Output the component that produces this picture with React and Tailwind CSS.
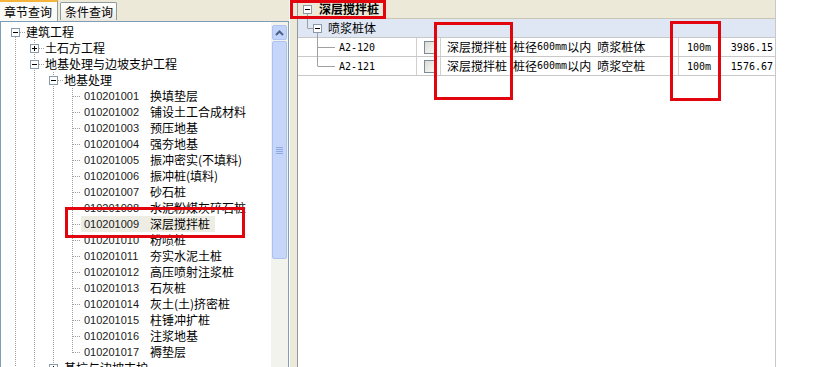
import React from "react";

const CJK = { fontFamily: '"Noto Sans CJK SC", "Liberation Sans", sans-serif' };
const SANS = { fontFamily: '"Liberation Sans", "Noto Sans CJK SC", sans-serif' };
const MONO = { fontFamily: '"DejaVu Sans Mono", "Liberation Mono", monospace' };

const items = [
  ["010201001", "换填垫层"],
  ["010201002", "铺设土工合成材料"],
  ["010201003", "预压地基"],
  ["010201004", "强夯地基"],
  ["010201005", "振冲密实(不填料)"],
  ["010201006", "振冲桩(填料)"],
  ["010201007", "砂石桩"],
  ["010201008", "水泥粉煤灰碎石桩"],
  ["010201009", "深层搅拌桩"],
  ["010201010", "粉喷桩"],
  ["010201011", "夯实水泥土桩"],
  ["010201012", "高压喷射注浆桩"],
  ["010201013", "石灰桩"],
  ["010201014", "灰土(土)挤密桩"],
  ["010201015", "柱锤冲扩桩"],
  ["010201016", "注浆地基"],
  ["010201017", "褥垫层"],
];

const rows = [
  { lvl: 0, box: "-", text: "建筑工程" },
  { lvl: 1, box: "+", text: "土石方工程" },
  { lvl: 1, box: "-", text: "地基处理与边坡支护工程" },
  { lvl: 2, box: "-", text: "地基处理" },
  ...items.map(([c, n]) => ({ lvl: 3, code: c, text: n, sel: c === "010201009" })),
  { lvl: 2, box: "+", text: "基坑与边坡支护" },
];

const LX = [14, 33, 52, 71];
const cy = (i) => 10 + 16 * i;

function TreeLines() {
  const dot = { stroke: "#a0a0a0", strokeWidth: 1, strokeDasharray: "1 1" };
  const v = (x, y1, y2, k) => <line key={k} x1={x + 0.5} x2={x + 0.5} y1={y1} y2={y2} style={dot} />;
  const h = (x1, x2, y, k) => <line key={k} x1={x1} x2={x2} y1={y + 0.5} y2={y + 0.5} style={dot} />;
  const els = [];
  els.push(v(LX[0], cy(0) + 5, 360, "v0"));
  els.push(v(LX[1], cy(1) - 8, 360, "v1"));
  els.push(v(LX[2], cy(3) - 8, 360, "v2"));
  els.push(v(LX[3], cy(4) - 8, cy(20) + 1, "v3"));
  rows.forEach((r, i) => {
    const x = LX[r.lvl];
    if (r.box) {
      els.push(h(x + 5, x + 10, cy(i), "h" + i));
      els.push(
        <g key={"b" + i}>
          <rect x={x - 4 + 0.5} y={cy(i) - 4 + 0.5} width={8} height={8} fill="#fff" stroke="#8a9aa8" />
          <line x1={x - 2} x2={x + 3} y1={cy(i) + 0.5} y2={cy(i) + 0.5} stroke="#000" />
          {r.box === "+" && <line x1={x + 0.5} x2={x + 0.5} y1={cy(i) - 2} y2={cy(i) + 3} stroke="#000" />}
        </g>
      );
    } else {
      els.push(h(x + 1, x + 9, cy(i), "h" + i));
    }
  });
  return (
    <svg className="absolute left-0 top-0" width="270" height="345">
      {els}
    </svg>
  );
}

function Tree() {
  return (
    <div className="relative flex-1 overflow-hidden bg-white">
      <TreeLines />
      <div className="relative pt-[2px]">
        {rows.map((r, i) =>
          r.code ? (
            <div key={i} className="h-[16px] flex items-center">
              <div
                className={
                  "ml-[80px] h-[16px] flex items-center pl-[3px] pr-[5px] " +
                  (r.sel ? "bg-[#eeede4]" : "")
                }
              >
                <span className="w-[66px] text-[11px] text-[#1a1a1a]" style={SANS}>
                  {r.code}
                </span>
                <span className="text-[12px] leading-[16px] text-black" style={CJK}>
                  {r.text}
                </span>
              </div>
            </div>
          ) : (
            <div
              key={i}
              className="h-[16px] flex items-center text-[12px] leading-[16px] text-black"
              style={{ ...CJK, paddingLeft: LX[r.lvl] + 11 }}
            >
              {r.text}
            </div>
          )
        )}
      </div>
    </div>
  );
}

function Scrollbar() {
  return (
    <div className="w-[17px] bg-[#f3f3ee] flex flex-col">
      <div className="h-[17px] p-[1px] mt-[2px]">
        <div className="h-full rounded-[2px] bg-[#c3d4fb] border border-[#b0c4f2] flex items-center justify-center">
          <svg width="9" height="6" viewBox="0 0 9 6">
            <path d="M1 5 L4.5 1.5 L8 5" fill="none" stroke="#4d6185" strokeWidth="2" />
          </svg>
        </div>
      </div>
      <div className="h-[218px] mx-[1px] rounded-[2px] bg-[#c6d6fb] border border-[#aec2f1] flex flex-col items-center justify-center gap-[1px]">
        {[0, 1, 2, 3].map((k) => (
          <div key={k} className="w-[7px] h-[1px] bg-[#eef3fe] border-b border-[#8fa8e0]" />
        ))}
      </div>
    </div>
  );
}

function MinusBox() {
  return (
    <div className="w-[9px] h-[9px] border border-[#8a9aa8] bg-white flex items-center justify-center relative">
      <div className="w-[5px] h-[1px] bg-black" />
    </div>
  );
}

function Right() {
  const line = "#a0a0a0";
  return (
    <div className="w-[478px] flex flex-col border-r border-[#c8c8c8] relative" style={CJK}>
      <div className="h-[19px] bg-[#ece9d8] border-b border-[#c9c6b6] flex items-center pl-[5px]">
        <MinusBox />
        <span className="ml-[7px] text-[12px] font-bold text-black leading-[16px]">深层搅拌桩</span>
      </div>
      <div className="h-[19px] bg-[#dfe7f4] border-b border-[#c8c8c8] flex items-center pl-[15px] relative">
        <MinusBox />
        <span className="ml-[6px] text-[12px] text-black leading-[16px]">喷浆桩体</span>
      </div>
      {[
        ["A2-120", "喷浆桩体", "3986.15"],
        ["A2-121", "喷浆空桩", "1576.67"],
      ].map(([code, tail, price], i) => (
        <div key={i} className="h-[19px] border-b border-[#c8c8c8] flex bg-white">
          <div className="w-[119px] border-r border-[#d0d0d0] flex items-center pl-[41px]">
            <span className="text-[10px] text-black" style={MONO}>
              {code}
            </span>
          </div>
          <div className="w-[24px] border-r border-[#d0d0d0] flex items-center pl-[7px]">
            <div className="w-[13px] h-[13px] border border-[#7c8a99] bg-gradient-to-br from-[#dcdcd6] to-[#fbfbf9]" />
          </div>
          <div className="w-[238px] border-r border-[#d0d0d0] flex items-center pl-[6px] text-[12px] text-black leading-[16px]">
            <span>深层搅拌桩</span>
            <span className="ml-[6px]">桩径</span>
            <span className="text-[10px]" style={MONO}>
              600mm
            </span>
            <span>以内</span>
            <span className="ml-[6px]">{tail}</span>
          </div>
          <div className="w-[41px] border-r border-[#d0d0d0] flex items-center justify-center">
            <span className="text-[10px] text-black" style={MONO}>
              100m
            </span>
          </div>
          <div className="flex-1 flex items-center justify-end pr-[2px]">
            <span className="text-[10px] text-black" style={MONO}>
              {price}
            </span>
          </div>
        </div>
      ))}
      <svg className="absolute left-0 top-0 pointer-events-none" width="60" height="80">
        <line x1="9.5" x2="9.5" y1="14" y2="28" stroke={line} />
        <line x1="9.5" x2="15" y1="28.5" y2="28.5" stroke={line} />
        <line x1="19.5" x2="19.5" y1="33" y2="66" stroke={line} />
        <line x1="19.5" x2="37" y1="47.5" y2="47.5" stroke={line} />
        <line x1="19.5" x2="37" y1="66.5" y2="66.5" stroke={line} />
      </svg>
    </div>
  );
}

function RedBox({ cls }) {
  return <div className={"absolute border-[3px] border-[#e3050d] pointer-events-none " + cls} />;
}

export default function App() {
  return (
    <div className="relative w-[826px] h-[367px] overflow-hidden bg-white flex" style={CJK}>
      <div className="w-[289px] h-full flex flex-col bg-[#ece9d8]">
        <div className="h-[21px] flex items-end relative">
          <div className="w-[58px] h-[21px] bg-[#fafaf7] border-t-2 border-[#f5b53a] border-r border-r-[#919b9c] flex items-center pl-[4px] text-[12px] text-black relative z-10">
            章节查询
          </div>
          <div className="ml-[2px] w-[57px] h-[18px] mb-[1px] rounded-t-[2px] border border-[#919b9c] border-b-0 bg-gradient-to-b from-[#ffffff] to-[#ecebe5] flex items-center pl-[4px] text-[12px] text-black">
            条件查询
          </div>
        </div>
        <div className="flex-1 flex border border-[#7f9db9] bg-white">
          <Tree />
          <Scrollbar />
        </div>
      </div>
      <div className="w-[9px] h-full bg-[#ece9d8] border-l border-l-white border-r border-r-[#8e9aa4]" />
      <div className="flex-1 h-full flex">
        <Right />
      </div>

      <RedBox cls="left-[290px] top-0 w-[96px] h-[19px]" />
      <RedBox cls="left-[65px] top-[207px] w-[180px] h-[31px]" />
      <RedBox cls="left-[434px] top-[22px] w-[79px] h-[78px]" />
      <RedBox cls="left-[670px] top-[21px] w-[51px] h-[80px]" />
    </div>
  );
}
